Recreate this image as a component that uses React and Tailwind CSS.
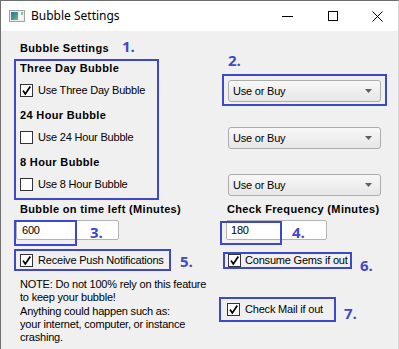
import React from 'react';

// Qt-on-Windows "Bubble Settings" dialog, with the blue numbered annotations drawn on top.

const Check = ({ checked }) => (
  <div className="w-[13px] h-[13px] shrink-0 bg-white border border-[#333333] flex items-center justify-center">
    {checked && (
      <svg width="11" height="11" viewBox="0 0 11 11">
        <path d="M2 5.5 L4.3 9 L9.3 1.5" fill="none" stroke="#000" strokeWidth="1.7" />
      </svg>
    )}
  </div>
);

const Num = ({ children, className = '' }) => (
  <span className={"font-['Open_Sans',sans-serif] font-bold text-[15px] leading-none tracking-normal text-[#3f48cc] " + className}>
    {children}
  </span>
);

const Combo = ({ className = '' }) => (
  <div
    className={
      'w-[153px] h-[22px] border border-[#adadad] rounded-[3px] bg-linear-to-b from-[#f8f8f8] to-[#e6e6e6] flex items-center pl-[4px] pr-[8px] ' +
      className
    }
  >
    <span className="text-black">Use or Buy</span>
    <svg className="ml-auto" width="7" height="4" viewBox="0 0 7 4">
      <path d="M0 0 H7 L3.5 4 Z" fill="#5f5f5f" />
    </svg>
  </div>
);

const Heading = ({ children, className = '' }) => (
  <div className={'h-[14px] leading-[14px] font-bold tracking-[0.35px] whitespace-nowrap ' + className}>{children}</div>
);

const CheckRow = ({ label, checked, className = '' }) => (
  <div className={'h-[15px] flex items-center ' + className}>
    <Check checked={checked} />
    <span className="ml-[5px] whitespace-nowrap">{label}</span>
  </div>
);

export default function App() {
  return (
    <div className="w-[399px] h-[349px] overflow-hidden bg-[#f0f0f0] border-t border-l border-[#6f6f6f] border-r border-r-[#d6d6d6] flex flex-col font-['Liberation_Sans',sans-serif] text-[11px] tracking-[-0.2px] text-black">
      {/* title bar */}
      <div className="h-[30px] shrink-0 bg-white flex items-center">
        <svg className="ml-[8px]" width="16" height="12" viewBox="0 0 16 12">
          <defs>
            <linearGradient id="ico" x1="0" y1="0" x2="1" y2="1">
              <stop offset="0" stopColor="#3b6fa8" />
              <stop offset="0.55" stopColor="#3f9a8c" />
              <stop offset="1" stopColor="#86c06a" />
            </linearGradient>
          </defs>
          <rect x="0.5" y="0.5" width="15" height="11" fill="#ececec" stroke="#a3a3a3" />
          <rect x="2" y="2" width="7" height="8" fill="url(#ico)" />
          <rect x="10" y="2" width="4" height="8" fill="#f6f6f6" />
          <rect x="12" y="2" width="2" height="3" fill="#8cc09a" />
        </svg>
        <span className="ml-[6px] font-['Noto_Sans',sans-serif] text-[12px] tracking-normal leading-none">Bubble Settings</span>
        <div className="ml-auto mr-[-2px] flex h-full">
          <div className="w-[45px] h-full flex items-center justify-center">
            <div className="w-[11px] h-px bg-black" />
          </div>
          <div className="w-[45px] h-full flex items-center justify-center">
            <div className="w-[10px] h-[10px] border border-black" />
          </div>
          <div className="w-[45px] h-full flex items-center justify-center">
            <svg width="11" height="11" viewBox="0 0 11 11">
              <path d="M0.5 0.5 L10.5 10.5 M10.5 0.5 L0.5 10.5" stroke="#000" strokeWidth="1" />
            </svg>
          </div>
        </div>
      </div>

      {/* body */}
      <div className="flex-1 pl-[13px]">
        {/* row A */}
        <div className="flex items-start">
          <div className="w-[205px] shrink-0">
            <div className="mt-[9px] h-[16px] flex items-center pl-[6px]">
              <span className="font-bold tracking-[0.35px]">Bubble Settings</span>
              <Num className="ml-[13px] mb-[4px]">1.</Num>
            </div>
            <div className="mt-[3px] w-[145px] border-2 border-[#3f48cc] pl-[4px] pb-[6px]">
              <Heading>Three Day Bubble</Heading>
              <CheckRow className="mt-[8px]" label="Use Three Day Bubble" checked />
              <Heading className="mt-[10px]">24 Hour Bubble</Heading>
              <CheckRow className="mt-[8px]" label="Use 24 Hour Bubble" />
              <Heading className="mt-[10px]">8 Hour Bubble</Heading>
              <CheckRow className="mt-[8px]" label="Use 8 Hour Bubble" />
            </div>
          </div>
          <div className="flex flex-col items-start">
            <div className="mt-[21px] h-[16px] flex items-center ml-[9px]">
              <Num>2.</Num>
            </div>
            <div className="mt-[6px] ml-[3px] border-2 border-[#3f48cc] pt-[4px] pl-[4px] pr-[4px] pb-[2px]">
              <Combo />
            </div>
            <Combo className="mt-[21px] ml-[9px]" />
            <Combo className="mt-[25px] ml-[9px]" />
          </div>
        </div>

        {/* row B */}
        <div className="flex items-start">
          <div className="w-[205px] shrink-0">
            <Heading className="mt-[2px] pl-[6px]">Bubble on time left (Minutes)</Heading>
            <div className="relative mt-[2px] h-[26px]">
              <div className="ml-[2px] mt-[4px] w-[103px] h-[20px] bg-white border border-[#b4b4b4] rounded-[2px] flex items-center pl-[5px]">
                600
              </div>
              <div className="absolute left-0 top-0 w-[63px] h-[26px] border-2 border-[#3f48cc]" />
              <Num className="absolute left-[76px] top-[5px]">3.</Num>
            </div>
          </div>
          <div>
            <Heading className="mt-[2px] ml-[8px]">Check Frequency (Minutes)</Heading>
            <div className="relative mt-[2px] h-[26px]">
              <div className="ml-[7px] mt-[4px] w-[101px] h-[20px] bg-white border border-[#b4b4b4] rounded-[2px] flex items-center pl-[4px]">
                180
              </div>
              <div className="absolute left-[1px] top-[1px] w-[62px] h-[24px] border-2 border-[#3f48cc]" />
              <Num className="absolute left-[73px] top-[5px]">4.</Num>
            </div>
          </div>
        </div>

        {/* row C */}
        <div className="flex items-start">
          <div className="w-[205px] shrink-0 flex items-start">
            <div className="mt-[3px] w-[157px] h-[22px] border-2 border-[#3f48cc] pl-[4px] flex items-center">
              <Check checked />
              <span className="ml-[5px] whitespace-nowrap">Receive Push Notifications</span>
            </div>
            <Num className="ml-[9px] mt-[8px]">5.</Num>
          </div>
          <div className="flex items-start">
            <div className="mt-[6px] ml-[4px] w-[129px] h-[17px] border-2 border-[#3f48cc] pl-[3px] flex items-center">
              <Check checked />
              <span className="ml-[4px] whitespace-nowrap">Consume Gems if out</span>
            </div>
            <Num className="ml-[8px] mt-[12px]">6.</Num>
          </div>
        </div>

        {/* row D */}
        <div className="flex items-start">
          <div className="w-[205px] shrink-0">
            <p className="mt-[5px] ml-[6px] leading-[13.25px] whitespace-nowrap">
              NOTE: Do not 100% rely on this feature
              <br />
              to keep your bubble!
              <br />
              Anything could happen such as:
              <br />
              your internet, computer, or instance
              <br />
              crashing.
            </p>
          </div>
          <div className="flex items-start">
            <div className="mt-[24px] w-[117px] h-[25px] border-2 border-[#3f48cc] pl-[6px] flex items-center">
              <Check checked />
              <span className="ml-[5px] whitespace-nowrap">Check Mail if out</span>
            </div>
            <Num className="ml-[8px] mt-[33px]">7.</Num>
          </div>
        </div>
      </div>
    </div>
  );
}
